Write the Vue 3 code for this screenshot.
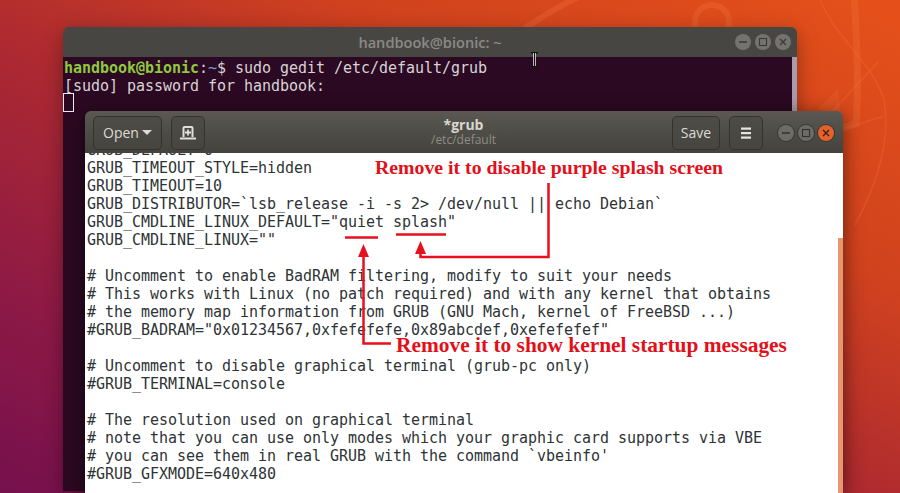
<script setup>
const editorLines = [
  'GRUB_DEFAULT=0',
  'GRUB_TIMEOUT_STYLE=hidden',
  'GRUB_TIMEOUT=10',
  'GRUB_DISTRIBUTOR=`lsb_release -i -s 2> /dev/null || echo Debian`',
  'GRUB_CMDLINE_LINUX_DEFAULT="quiet splash"',
  'GRUB_CMDLINE_LINUX=""',
  '',
  '# Uncomment to enable BadRAM filtering, modify to suit your needs',
  '# This works with Linux (no patch required) and with any kernel that obtains',
  '# the memory map information from GRUB (GNU Mach, kernel of FreeBSD ...)',
  '#GRUB_BADRAM="0x01234567,0xfefefefe,0x89abcdef,0xefefefef"',
  '',
  '# Uncomment to disable graphical terminal (grub-pc only)',
  '#GRUB_TERMINAL=console',
  '',
  '# The resolution used on graphical terminal',
  '# note that you can use only modes which your graphic card supports via VBE',
  "# you can see them in real GRUB with the command `vbeinfo'",
  '#GRUB_GFXMODE=640x480',
]
</script>

<template>
  <div class="desktop">
    <svg class="wall" width="900" height="493" viewBox="0 0 900 493" fill="none">
      <g stroke="#f0743a" stroke-opacity="0.3">
        <circle cx="712" cy="22" r="17" stroke-width="6" />
        <path d="M525 28C555 8 575 -2 590 -8" stroke-width="6" />
        <path d="M854 -5C857 40 859 85 856 124L842 128" stroke-width="7" />
        <path d="M818 -5C835 40 872 60 884 100C890 135 882 175 855 225" stroke-width="1.5" />
        <path d="M820 125L878 62M846 128L884 116" stroke-width="1.5" />
      </g>
      <path d="M818 108L838 89L842 125Z" fill="#f0743a" fill-opacity="0.22" />
    </svg>

    <section class="terminal">
      <header class="term-bar">
        <span class="term-title">handbook@bionic: ~</span>
        <div class="controls">
          <span class="ctl"><svg width="16" height="16" viewBox="0 0 16 16"><path d="M4 8h8" stroke="#3a3935" stroke-width="1.3" /></svg></span>
          <span class="ctl"><svg width="16" height="16" viewBox="0 0 16 16"><rect x="4.5" y="4.5" width="7" height="7" fill="none" stroke="#3a3935" stroke-width="1.1" /></svg></span>
          <span class="ctl"><svg width="16" height="16" viewBox="0 0 16 16"><path d="M5 5l6 6M11 5l-6 6" stroke="#3a3935" stroke-width="1.3" /></svg></span>
        </div>
      </header>
      <div class="term-body">
        <div class="term-text">
          <div><b class="green">handbook@bionic</b>:<b class="blue">~</b>$ sudo gedit /etc/default/grub</div>
          <div>[sudo] password for handbook:</div>
          <div class="cursor"></div>
        </div>
        <div class="term-scroll"></div>
      </div>
    </section>

    <section class="gedit">
      <header class="ged-bar">
        <div class="group">
          <button class="btn open">Open<i class="caret"></i></button>
          <button class="btn icon">
            <svg width="18" height="18" viewBox="0 0 18 18" fill="none" stroke="#e0dfd8" stroke-width="2">
              <path d="M4.5 13V4a1 1 0 0 1 1-1h7a1 1 0 0 1 1 1v9" />
              <path d="M1 14.5h16" />
              <path d="M9 5.5v6M6 8.5h6" stroke-width="1.8" />
            </svg>
          </button>
        </div>
        <div class="ged-title">
          <strong>*grub</strong>
          <small>/etc/default</small>
        </div>
        <div class="group end">
          <button class="btn save">Save</button>
          <button class="btn icon menu">
            <svg width="16" height="16" viewBox="0 0 16 16" fill="#e6e5de"><rect x="3" y="2.5" width="10" height="2.2" /><rect x="3" y="7" width="10" height="2.2" /><rect x="3" y="11.5" width="10" height="2.2" /></svg>
          </button>
          <div class="controls light">
            <span class="ctl"><svg width="16" height="16" viewBox="0 0 16 16"><path d="M4 8h8" stroke="#33322e" stroke-width="1.3" /></svg></span>
            <span class="ctl"><svg width="16" height="16" viewBox="0 0 16 16"><rect x="4.5" y="4.5" width="7" height="7" fill="none" stroke="#33322e" stroke-width="1.1" /></svg></span>
            <span class="ctl close"><svg width="16" height="16" viewBox="0 0 16 16"><path d="M5 5l6 6M11 5l-6 6" stroke="#3a2012" stroke-width="1.4" /></svg></span>
          </div>
        </div>
      </header>
      <div class="ged-body">
        <pre class="code"><div v-for="(line, i) in editorLines" :key="i" class="ln">{{ line }}</div></pre>
        <div class="ged-scroll"></div>
      </div>
    </section>

    <svg class="marks" width="900" height="493" viewBox="0 0 900 493" fill="none">
      <g stroke="#e8101c" stroke-width="2.5">
        <path d="M345 237.5h33M396 234.5h50" />
        <path d="M548.5 183v74H420.5V250" />
        <path d="M363.5 252V343.5H391" />
      </g>
      <g fill="#e8101c">
        <path d="M420.5 241L426 254H415Z" />
        <path d="M363.5 244L369 257H358Z" />
      </g>
    </svg>
    <span class="note n1">Remove it to disable purple splash screen</span>
    <span class="note n2">Remove it to show kernel startup messages</span>

    <svg class="ibeam" width="9" height="16" viewBox="0 0 9 16" fill="none">
      <path d="M1 .7h7M1 14.3h7" stroke="#111" stroke-width="1.4" />
      <path d="M4.5 1v13" stroke="#fff" stroke-width="2.4" />
      <path d="M4.5 1v13" stroke="#111" />
    </svg>
  </div>
</template>

<style>
html, body { margin: 0; padding: 0; overflow: hidden; }
</style>

<style scoped>
.desktop {
  position: relative;
  width: 900px;
  height: 493px;
  overflow: hidden;
  background: linear-gradient(28deg, #76104e 0%, #8f1a44 22%, #ae2a30 47%, #d0421e 70%, #e6511a 100%);
  font-family: "Open Sans", "Noto Sans", sans-serif;
}
.wall, .marks, .ibeam { position: absolute; left: 0; top: 0; }
.ibeam { left: 530px; top: 52px; }

.terminal {
  position: absolute;
  left: 63px;
  top: 27px;
  width: 734px;
  height: 464px;
  display: flex;
  flex-direction: column;
  border-radius: 6px 6px 0 0;
  overflow: hidden;
  box-shadow: 0 6px 20px rgba(0, 0, 0, 0.35);
}
.term-bar {
  height: 30px;
  flex: none;
  background: #474643;
  position: relative;
  display: flex;
  align-items: center;
  justify-content: flex-end;
  padding-right: 6px;
}
.term-title {
  position: absolute;
  left: 0;
  right: 0;
  text-align: center;
  font-size: 14.6px;
  font-weight: 600;
  color: #8b8a85;
}
.controls { display: flex; gap: 4px; }
.ctl {
  width: 16px;
  height: 16px;
  border-radius: 50%;
  background: #74736f;
  display: block;
}
.ctl svg { display: block; }
.term-body {
  flex: 1;
  display: flex;
  background: #2c0922;
}
.term-text {
  flex: 1;
  padding: 2px 0 0 1px;
  font: 15px/18px "DejaVu Sans Mono", monospace;
  letter-spacing: -0.03px;
  color: #d8d3d6;
}
.green { color: #8fcb3e; }
.blue { color: #729fcf; font-weight: 400; }
.cursor {
  width: 9px;
  height: 17px;
  margin: -2px 0 0 -1px;
  border: 1px solid #f0eeec;
}
.term-scroll {
  width: 5px;
  background: #a99bac;
}

.gedit {
  position: absolute;
  left: 85px;
  top: 111px;
  width: 758px;
  height: 382px;
  display: flex;
  flex-direction: column;
  border-radius: 6px 6px 0 0;
  overflow: hidden;
  box-shadow: 0 4px 20px rgba(0, 0, 0, 0.55);
}
.ged-bar {
  height: 42px;
  flex: none;
  box-sizing: border-box;
  background: linear-gradient(#5a5851, #43423d);
  display: grid;
  grid-template-columns: 1fr auto 1fr;
  align-items: center;
  padding: 1px 9px 0 8px;
}
.group { display: flex; align-items: center; gap: 9px; }
.group.end { justify-content: flex-end; }
.btn {
  height: 34px;
  padding: 0;
  box-sizing: border-box;
  background: linear-gradient(#4e4c47, #474540);
  border: 1px solid #33322e;
  border-radius: 5px;
  color: #dcdbd4;
  font: 14px "Open Sans", "Noto Sans", sans-serif;
  display: flex;
  align-items: center;
  justify-content: center;
}
.open { width: 69px; gap: 3px; }
.caret {
  width: 0;
  height: 0;
  border: 5px solid transparent;
  border-top: 5px solid #dcdbd4;
  border-bottom: 0;
}
.icon { width: 34px; }
.ged-title {
  display: flex;
  flex-direction: column;
  align-items: center;
  gap: 1px;
  margin-top: -1px;
  color: #d8d7d0;
  line-height: 15px;
}
.ged-title strong { font-size: 14px; line-height: 14px; font-weight: 700; }
.ged-title small { font-size: 12px; line-height: 14px; color: #8d8c86; }
.save { width: 48px; }
.controls.light { margin-left: 6px; }
.controls.light .ctl { background: #6c6b67; box-shadow: 0 0 0 1px #393834; }
.controls.light .close { background: #e2612c; }

.ged-body {
  flex: 1;
  position: relative;
  background: #fff;
  overflow: hidden;
}
.code {
  margin: -12px 0 0 2px;
  font: 15px/18px "DejaVu Sans Mono", monospace;
  letter-spacing: -0.03px;
  color: #2e3436;
}
.ln { height: 18px; white-space: pre; }
.ged-scroll {
  position: absolute;
  right: 0;
  top: 85px;
  bottom: 0;
  width: 5px;
  background: #e8966f;
}
.note {
  position: absolute;
  font-family: "Liberation Serif", serif;
  font-weight: 700;
  color: #e30f19;
  white-space: nowrap;
  line-height: 20px;
}
.n1 { left: 375px; top: 157px; font-size: 19.8px; }
.n2 { left: 396px; top: 335px; font-size: 21.4px; }
</style>
